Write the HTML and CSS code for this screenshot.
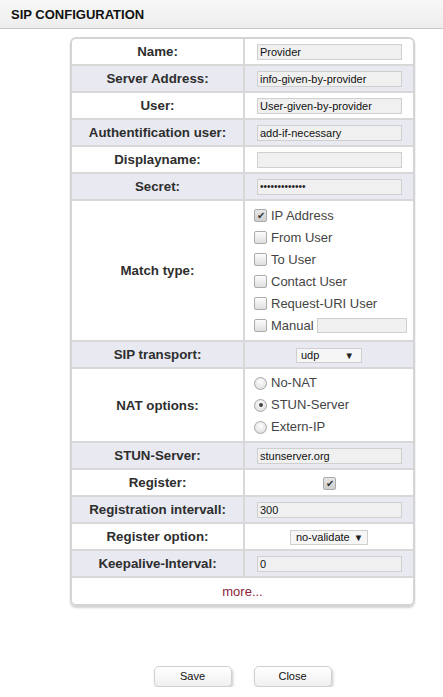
FILE: index.html
```html
<!DOCTYPE html>
<html>
<head>
<meta charset="utf-8">
<link rel="stylesheet" href="styles.css">
</head>
<body>
<div class="header"><span class="title">SIP CONFIGURATION</span></div>
<div class="panel">
<table class="cfg">
<tr><td class="lbl">Name:</td><td class="val"><span class="inp">Provider</span></td></tr>
<tr class="alt"><td class="lbl">Server Address:</td><td class="val"><span class="inp">info-given-by-provider</span></td></tr>
<tr><td class="lbl">User:</td><td class="val"><span class="inp">User-given-by-provider</span></td></tr>
<tr class="alt"><td class="lbl">Authentification user:</td><td class="val"><span class="inp">add-if-necessary</span></td></tr>
<tr><td class="lbl">Displayname:</td><td class="val"><span class="inp"></span></td></tr>
<tr class="alt"><td class="lbl">Secret:</td><td class="val"><span class="inp pw">•••••••••••••</span></td></tr>
<tr class="tall-match"><td class="lbl">Match type:</td><td class="val list">
  <div class="opt"><span class="cb on">✔</span>IP Address</div>
  <div class="opt"><span class="cb"></span>From User</div>
  <div class="opt"><span class="cb"></span>To User</div>
  <div class="opt"><span class="cb"></span>Contact User</div>
  <div class="opt"><span class="cb"></span>Request-URI User</div>
  <div class="opt"><span class="cb"></span>Manual <span class="inp small"></span></div>
</td></tr>
<tr class="alt"><td class="lbl">SIP transport:</td><td class="val"><span class="sel w66"><span>udp</span><span class="arr">▼</span></span></td></tr>
<tr class="tall-nat"><td class="lbl">NAT options:</td><td class="val list">
  <div class="opt"><span class="rb"></span>No-NAT</div>
  <div class="opt"><span class="rb on"></span>STUN-Server</div>
  <div class="opt"><span class="rb"></span>Extern-IP</div>
</td></tr>
<tr class="alt"><td class="lbl">STUN-Server:</td><td class="val"><span class="inp">stunserver.org</span></td></tr>
<tr><td class="lbl">Register:</td><td class="val"><span class="cb on solo">✔</span></td></tr>
<tr class="alt"><td class="lbl">Registration intervall:</td><td class="val"><span class="inp">300</span></td></tr>
<tr><td class="lbl">Register option:</td><td class="val"><span class="sel"><span>no-validate</span><span class="arr2">▼</span></span></td></tr>
<tr class="alt"><td class="lbl">Keepalive-Interval:</td><td class="val"><span class="inp">0</span></td></tr>
<tr class="last"><td class="more" colspan="2">more...</td></tr>
</table>
</div>
<div class="buttons">
  <span class="btn">Save</span>
  <span class="btn">Close</span>
</div>
</body>
</html>
```

FILE: styles.css
```css
html, body {
  margin: 0;
  padding: 0;
  background: #ffffff;
  font-family: "Liberation Sans", Arial, sans-serif;
}
.header {
  height: 29px;
  box-sizing: border-box;
  border-bottom: 1px solid #c8c8c8;
  background: linear-gradient(#f8f8f8, #ededed);
  padding: 5px 0 0 11px;
}
.title {
  font-weight: bold;
  font-size: 13px;
  color: #111;
}
.panel {
  margin: 8px 0 0 70px;
  width: 345px;
  box-sizing: border-box;
  border: 2px solid #d4d4d4;
  border-radius: 6px;
  overflow: hidden;
  box-shadow: 0 2px 2px rgba(0,0,0,0.18);
}
.cfg {
  width: 100%;
  border-collapse: collapse;
  border-spacing: 0;
}
.cfg td {
  height: 25px;
  padding: 0;
  border-bottom: 2px solid #d8d8d8;
  vertical-align: middle;
}
.cfg tr.last td {
  border-bottom: none;
  height: 26px;
}
.cfg tr.alt td {
  background: #e8e9f1;
}
.lbl {
  width: 171px;
  border-right: 2px solid #d8d8d8;
  text-align: center;
  font-weight: bold;
  font-size: 13.3px;
  color: #2e2e2e;
}
.val {
  text-align: center;
}
.inp {
  display: inline-block;
  box-sizing: border-box;
  width: 145px;
  height: 16px;
  border: 1px solid #cfcfcf;
  background: #f0f0f0;
  font-size: 11px;
  line-height: 14px;
  color: #111;
  text-align: left;
  padding-left: 2px;
  vertical-align: middle;
  margin-left: 1px;
}
.inp.pw {
  font-size: 10px;
  letter-spacing: 0;
  color: #222;
}
.inp.small {
  width: 90px;
  height: 15px;
  margin-left: 3px;
}
.tall-match td { height: 139px; }
.tall-nat td { height: 72px; }
.list {
  text-align: left;
  padding-left: 9px !important;
}
.opt {
  height: 22px;
  line-height: 22px;
  font-size: 13px;
  color: #444;
  display: flex;
  align-items: center;
}
.cb {
  display: inline-block;
  box-sizing: border-box;
  width: 13px;
  height: 13px;
  border: 1px solid #ababab;
  border-radius: 2px;
  background: linear-gradient(#fdfdfd, #dedede);
  margin-right: 4px;
  font-size: 10px;
  line-height: 11px;
  text-align: center;
  color: #333;
  overflow: hidden;
}
.cb.on {
  background: linear-gradient(#e6e6e6, #cfcfcf);
}
.cb.solo {
  margin: 0 0 0 1px;
  vertical-align: middle;
}
.rb {
  display: inline-block;
  box-sizing: border-box;
  width: 13px;
  height: 13px;
  border: 1px solid #a8a8a8;
  border-radius: 50%;
  background: radial-gradient(circle at 50% 35%, #fdfdfd, #d8d8d8);
  margin-right: 4px;
  position: relative;
}
.rb.on::after {
  content: "";
  position: absolute;
  left: 3.5px;
  top: 3.5px;
  width: 4px;
  height: 4px;
  border-radius: 50%;
  background: #444;
}
.sel {
  display: inline-flex;
  align-items: center;
  box-sizing: border-box;
  height: 15px;
  border: 1px solid #cfcfcf;
  background: #f6f6f6;
  font-size: 11px;
  color: #111;
  padding: 0 4px 0 5px;
  vertical-align: middle;
}
.sel.w66 {
  width: 66px;
  justify-content: space-between;
  padding: 0 7px 0 4px;
}
.arr, .arr2 {
  font-size: 9.5px;
  color: #222;
}
.arr2 { margin-left: 4px; }
.more {
  text-align: center;
  font-size: 13px;
  color: #8e1d3b;
}
.buttons {
  margin-top: 60px;
  margin-left: 70px;
  width: 345px;
  display: flex;
  justify-content: center;
  gap: 22px;
}
.btn {
  display: inline-block;
  box-sizing: border-box;
  width: 78px;
  height: 21px;
  line-height: 19px;
  border: 1px solid #d0d0d0;
  border-radius: 5px;
  background: linear-gradient(#ffffff, #f0f0f0);
  box-shadow: 1px 2px 3px rgba(0,0,0,0.22);
  text-align: center;
  font-size: 11px;
  color: #111;
}
```
